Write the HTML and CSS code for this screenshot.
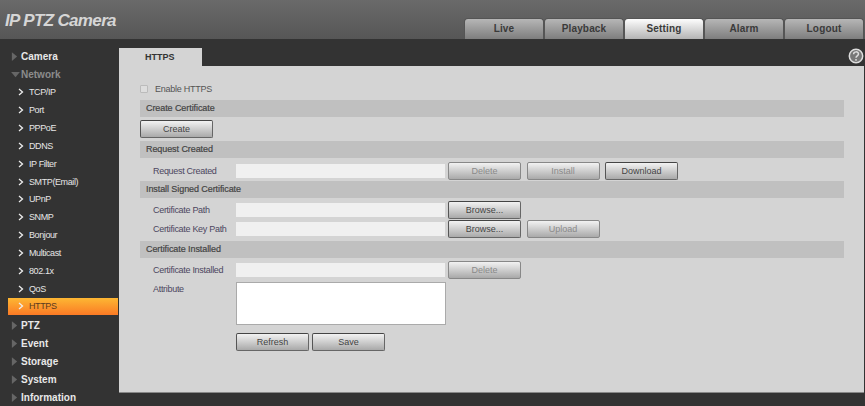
FILE: index.html
```html
<!DOCTYPE html>
<html lang="en">
<head>
<meta charset="utf-8">
<title>IP PTZ Camera</title>
<link rel="stylesheet" href="styles.css">
</head>
<body>
<header class="top">
  <div class="logo">IP PTZ Camera</div>
  <nav class="tabs">
    <a class="tab">Live</a>
    <a class="tab">Playback</a>
    <a class="tab active">Setting</a>
    <a class="tab">Alarm</a>
    <a class="tab">Logout</a>
  </nav>
</header>
<div class="main">
  <aside class="side">
    <div class="group"><svg class="tri" viewBox="0 0 8 10"><path d="M1 0l6 5-6 5z"/></svg>Camera</div>
    <div class="group open"><svg class="tri" viewBox="0 0 10 8"><path d="M0 1h10l-5 6z"/></svg>Network</div>
    <div class="item"><svg class="chev" viewBox="0 0 6 8"><path d="M1 1l3.500 3-3.500 3"/></svg>TCP/IP</div>
    <div class="item"><svg class="chev" viewBox="0 0 6 8"><path d="M1 1l3.500 3-3.500 3"/></svg>Port</div>
    <div class="item"><svg class="chev" viewBox="0 0 6 8"><path d="M1 1l3.500 3-3.500 3"/></svg>PPPoE</div>
    <div class="item"><svg class="chev" viewBox="0 0 6 8"><path d="M1 1l3.500 3-3.500 3"/></svg>DDNS</div>
    <div class="item"><svg class="chev" viewBox="0 0 6 8"><path d="M1 1l3.500 3-3.500 3"/></svg>IP Filter</div>
    <div class="item"><svg class="chev" viewBox="0 0 6 8"><path d="M1 1l3.500 3-3.500 3"/></svg>SMTP(Email)</div>
    <div class="item"><svg class="chev" viewBox="0 0 6 8"><path d="M1 1l3.500 3-3.500 3"/></svg>UPnP</div>
    <div class="item"><svg class="chev" viewBox="0 0 6 8"><path d="M1 1l3.500 3-3.500 3"/></svg>SNMP</div>
    <div class="item"><svg class="chev" viewBox="0 0 6 8"><path d="M1 1l3.500 3-3.500 3"/></svg>Bonjour</div>
    <div class="item"><svg class="chev" viewBox="0 0 6 8"><path d="M1 1l3.500 3-3.500 3"/></svg>Multicast</div>
    <div class="item"><svg class="chev" viewBox="0 0 6 8"><path d="M1 1l3.500 3-3.500 3"/></svg>802.1x</div>
    <div class="item"><svg class="chev" viewBox="0 0 6 8"><path d="M1 1l3.500 3-3.500 3"/></svg>QoS</div>
    <div class="item current"><svg class="chev" viewBox="0 0 6 8"><path d="M1 1l3.500 3-3.500 3"/></svg>HTTPS</div>
    <div class="group"><svg class="tri" viewBox="0 0 8 10"><path d="M1 0l6 5-6 5z"/></svg>PTZ</div>
    <div class="group"><svg class="tri" viewBox="0 0 8 10"><path d="M1 0l6 5-6 5z"/></svg>Event</div>
    <div class="group"><svg class="tri" viewBox="0 0 8 10"><path d="M1 0l6 5-6 5z"/></svg>Storage</div>
    <div class="group"><svg class="tri" viewBox="0 0 8 10"><path d="M1 0l6 5-6 5z"/></svg>System</div>
    <div class="group"><svg class="tri" viewBox="0 0 8 10"><path d="M1 0l6 5-6 5z"/></svg>Information</div>
  </aside>
  <section class="content">
    <div class="pagebar">
      <div class="pagetab">HTTPS</div>
      <svg class="help" viewBox="0 0 16 16"><circle cx="8" cy="8" r="6.700"/><path d="M5.600 6.300c0-3.200 4.900-3.200 4.900-.2 0 1.800-2.500 1.900-2.500 3.700"/><path class="dot" d="M8 11v1.800"/></svg>
    </div>
    <div class="panel">
      <label class="check"><span class="box"></span>Enable HTTPS</label>
      <h2 class="sec">Create Certificate</h2>
      <div class="btnrow"><button class="btn strong">Create</button></div>
      <h2 class="sec s2">Request Created</h2>
      <div class="row r1">
        <span class="lab">Request Created</span><span class="field"></span>
        <button class="btn off">Delete</button><button class="btn off">Install</button><button class="btn strong">Download</button>
      </div>
      <h2 class="sec s3">Install Signed Certificate</h2>
      <div class="row r2">
        <span class="lab">Certificate Path</span><span class="field"></span>
        <button class="btn strong">Browse...</button>
      </div>
      <div class="row r3">
        <span class="lab">Certificate Key Path</span><span class="field"></span>
        <button class="btn strong">Browse...</button><button class="btn off">Upload</button>
      </div>
      <h2 class="sec s4">Certificate Installed</h2>
      <div class="row r4">
        <span class="lab">Certificate Installed</span><span class="field"></span>
        <button class="btn off">Delete</button>
      </div>
      <div class="attr"><span class="lab">Attribute</span><span class="area"></span></div>
      <div class="actions"><button class="btn strong">Refresh</button><button class="btn strong">Save</button></div>
    </div>
  </section>
</div>
</body>
</html>
```
FILE: styles.css
```css
* { box-sizing: border-box; }
html, body { margin: 0; height: 100%; }
body {
  width: 865px; height: 406px; overflow: hidden;
  background: #333;
  font-family: "Liberation Sans", Arial, sans-serif;
  font-size: 9px; color: #444;
}
.top {
  height: 39px;
  background: linear-gradient(#6a6a6a, #565656);
  display: flex; justify-content: space-between; align-items: flex-end;
}
.logo {
  align-self: flex-start;
  margin: 11px 0 0 5px;
  font-size: 17px; line-height: 20px; font-weight: bold; font-style: italic;
  letter-spacing: -0.65px; color: #d6d6d6;
}
.tabs { display: flex; margin-right: 1px; }
.tab {
  width: 80px; height: 21px;
  border: 1px solid #555; border-bottom: 0; border-radius: 4px 4px 0 0;
  background: linear-gradient(#b6b6b6, #7e7e7e);
  font-size: 10px; font-weight: bold; letter-spacing: .15px; line-height: 20px;
  text-align: center; color: #3a3a3a;
}
.tab.active { background: linear-gradient(#fdfdfd, #b4b4b4); }
.main { display: flex; height: 367px; }
.side { width: 119px; flex: none; padding: 8.500px 1px 0 8px; }
.group, .item { display: flex; align-items: center; }
.group { height: 18px; padding-left: 3px; font-size: 10px; font-weight: bold; color: #e8e8e8; }
.group.open { color: #8c8c8c; }
.tri { width: 7px; height: 9px; margin-right: 3px; fill: #666; flex: none; }
.group.open .tri { width: 9px; height: 7px; margin-right: 1px; }
.item { height: 17.85px; padding-left: 10px; color: #e6e6e6; letter-spacing: -.4px; }
.chev { width: 6px; height: 8px; margin-right: 5px; fill: none; stroke: #eee; stroke-width: 1.300; flex: none; }
.item.current { background: linear-gradient(#fdb733, #fb7a25); color: #5a3a20; height: 17px; margin-bottom: 2.300px; }
.content { flex: 1; display: flex; flex-direction: column; }
.pagebar { height: 27px; display: flex; justify-content: space-between; align-items: flex-end; }
.pagetab {
  width: 83px; height: 18px; background: #d4d4d4;
  padding-left: 26px; font-size: 9px; font-weight: bold; line-height: 18px; color: #333;
}
.help { width: 16px; height: 16px; margin: 0 1px 2px 0; fill: #777; stroke: #ddd; stroke-width: 1.500; }
.help path { fill: none; }
.panel {
  height: 327px; margin-right: 1px;
  background: #d4d4d4; border-bottom: 1px solid #888;
  padding: 17px 20px 0 21px;
}
.check { display: flex; align-items: center; height: 11px; margin-bottom: 6px; color: #555; letter-spacing: -.25px; }
.box { width: 8px; height: 8px; margin-right: 7px; background: #ddd; border: 1px solid #bbb; border-radius: 1px; }
.sec {
  margin: 0; height: 17px; padding-left: 6px;
  background: #c0c0c0;
  font-size: 9px; font-weight: normal; -webkit-text-stroke: .2px #444; line-height: 16px; color: #444;
  letter-spacing: -.08px;
}
.btn {
  width: 73px; height: 18px; padding: 0;
  border: 1px solid #777; border-top-color: #555; border-radius: 2px;
  background: linear-gradient(#f2f2f2, #a9a9a9);
  font: 9px "Liberation Sans", Arial, sans-serif; color: #444;
}
.btn.strong { border-color: #444 #666 #666 #555; }
.btn.off { color: #8a8a8a; border-color: #888; }
.btnrow { margin-top: 3px; margin-bottom: 3px; display: flex; }
.row { display: flex; align-items: center; height: 18px; }
.r1 { margin: 4px 0 1px; }
.r2 { margin-top: 3px; }
.r3 { margin-top: 1px; margin-bottom: 3px; }
.r4 { margin-top: 3px; margin-bottom: 3px; }
.lab { width: 96px; padding-left: 13px; flex: none; color: #4c4660; letter-spacing: -.3px; }
.field { width: 209px; height: 14px; background: #f0f0f0; margin-right: 3px; flex: none; }
.row .btn + .btn { margin-left: 5.500px; }
.attr { display: flex; align-items: flex-start; margin-top: 1px; }
.attr .lab { padding-top: 2px; }
.area { width: 210px; height: 43px; background: #fff; border: 1px solid #aaa; }
.actions { display: flex; gap: 3px; margin: 8px 0 0 96px; }
```
